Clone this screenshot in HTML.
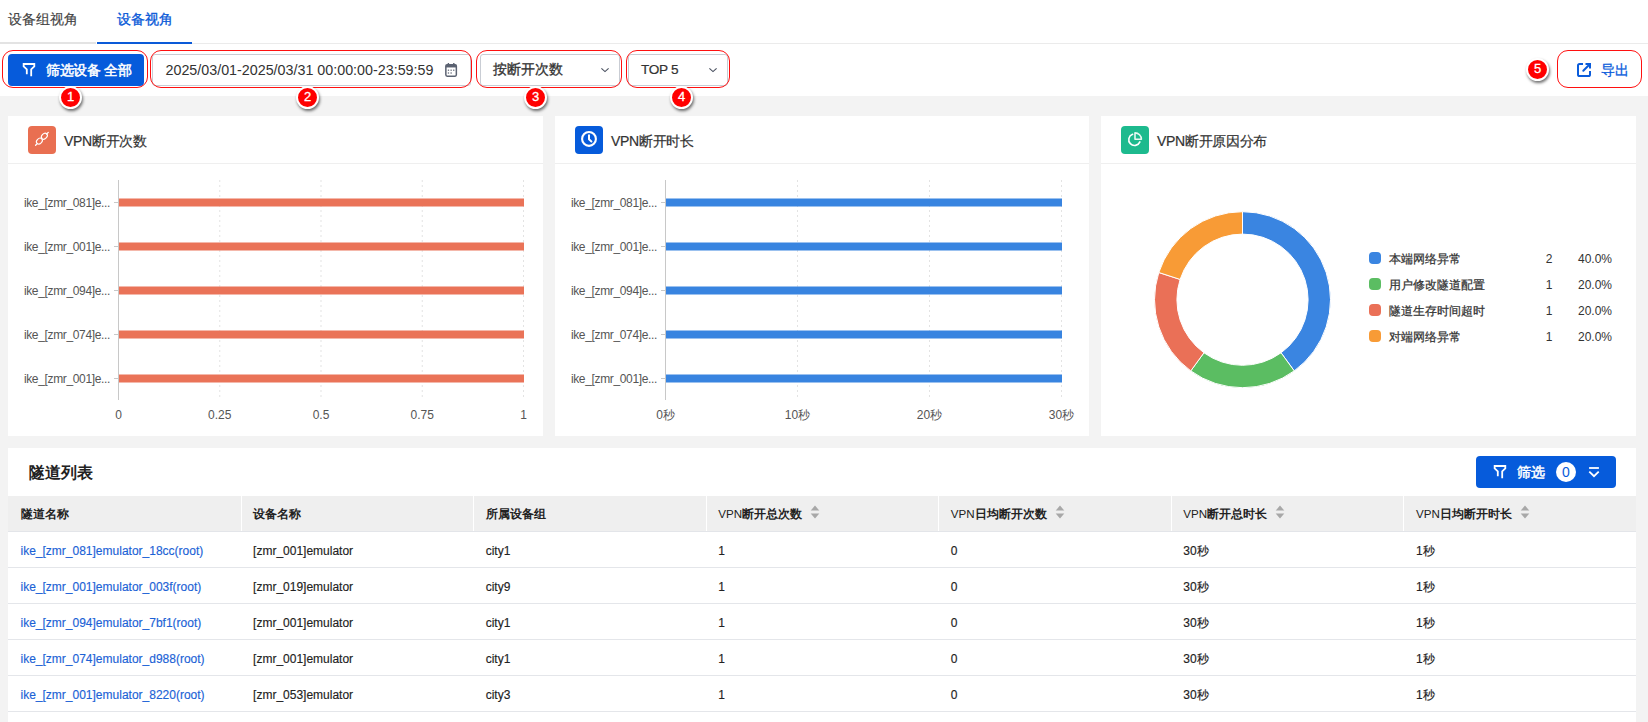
<!DOCTYPE html>
<html><head><meta charset="utf-8">
<style>
*{box-sizing:border-box;margin:0;padding:0}
html,body{width:1648px;height:722px;overflow:hidden;background:#f3f3f3;font-family:"Liberation Sans",sans-serif;color:#333}
.a{position:absolute}
.top{position:absolute;left:0;top:0;width:1648px;height:96px;background:#fff}
.tabline{position:absolute;left:0;top:42px;width:1648px;height:2px;background:#ebebeb}
.tab{position:absolute;top:9.5px;font-size:14px;line-height:18px;white-space:nowrap}
.ann{position:absolute;border:1.7px solid #ff1010;border-radius:11px}
.badge{position:absolute;width:23.4px;height:23.4px;border-radius:50%;background:#f00;border:2.6px solid #fff;box-shadow:1px 2px 3px rgba(0,0,0,.55);color:#fff;font-size:13px;font-weight:normal;text-align:center;line-height:17.4px;-webkit-text-stroke:0.3px #fff}
.inp{position:absolute;top:54px;height:32px;border:1px solid #c9cdd4;border-radius:3px;background:#fff}
.card{position:absolute;background:#fff}
.ctitle{position:absolute;left:56px;top:15.5px;font-size:14px;letter-spacing:-0.3px;line-height:18px;color:#333;white-space:nowrap;-webkit-text-stroke:0.2px #333}
.cicon{position:absolute;left:20px;top:10px;width:28px;height:28px;border-radius:4px}
.csep{position:absolute;left:0;top:47px;width:100%;height:1px;background:#efefef}
.ylab{position:absolute;font-size:12px;letter-spacing:-0.35px;line-height:14px;color:#555;white-space:nowrap;text-align:right}
.xlab{position:absolute;font-size:12px;line-height:14px;color:#555;white-space:nowrap;text-align:center;width:60px;margin-top:1px}
.th{position:absolute;top:0;height:36px;font-size:11.6px;font-weight:bold;line-height:36px;color:#222;white-space:nowrap}
.td{position:absolute;font-size:12px;line-height:38px;color:#222;white-space:nowrap;-webkit-text-stroke:0.15px currentColor}
</style></head><body>
<div class="top">
  <div class="a" style="left:0;top:42px;width:96px;height:2px;background:#e3e3e3"></div><div class="a" style="left:192px;top:43px;width:1456px;height:1px;background:#ebebeb"></div>
  <div class="tab" style="left:8.2px;color:#444;-webkit-text-stroke:0.15px #444">设备组视角</div>
  <div class="tab" style="left:117.4px;color:#0a5ad8;-webkit-text-stroke:0.3px #0a5ad8">设备视角</div>
  <div class="a" style="left:97px;top:42px;width:95px;height:2px;background:#0a5ad8"></div>
</div>



<!-- cards -->
<div class="card" style="left:8px;top:116px;width:535px;height:320px">
  <div class="cicon" style="background:#e96f51"><svg width="28" height="28" viewBox="0 0 28 28" style="display:block"><g fill="none" stroke="#fff" stroke-width="1.1"><ellipse cx="11.4" cy="15.1" rx="3.3" ry="2.5" transform="rotate(-45 11.4 15.1)"/><ellipse cx="16.4" cy="10.2" rx="3.3" ry="2.5" transform="rotate(-45 16.4 10.2)"/><path d="M7.6 19.2 L9.2 17.6 M18.6 8.0 L20.3 6.4" stroke-linecap="round" stroke-width="1.3"/></g></svg></div>
  <div class="ctitle">VPN断开次数</div>
  <div class="csep"></div>
</div>
<div class="card" style="left:555px;top:116px;width:534px;height:320px">
  <div class="cicon" style="background:#065bdb"><svg width="28" height="28" viewBox="0 0 28 28" style="display:block"><circle cx="14" cy="12.95" r="6.9" fill="none" stroke="#fff" stroke-width="2.1"/><path d="M14 9.3 V13.3 L16.4 15.5" fill="none" stroke="#fff" stroke-width="2" stroke-linecap="round" stroke-linejoin="round"/></svg></div>
  <div class="ctitle">VPN断开时长</div>
  <div class="csep"></div>
</div>
<div class="card" style="left:1101px;top:116px;width:535px;height:320px">
  <div class="cicon" style="background:#1dba8e"><svg width="28" height="28" viewBox="0 0 28 28" style="display:block"><path d="M11.6 8.2 A5.8 5.8 0 1 0 18.9 15.9" fill="none" stroke="#fff" stroke-width="1.6" stroke-linecap="round"/><path d="M14.0 6.9 V13.3 H20.4 A6.4 6.4 0 0 0 14.0 6.9 Z" fill="none" stroke="#e6f7f1" stroke-width="1.6" stroke-linejoin="round"/></svg></div>
  <div class="ctitle">VPN断开原因分布</div>
  <div class="csep"></div>
</div>
<svg class="a" style="left:0;top:0" width="1648" height="440" viewBox="0 0 1648 440"><line x1="219.75" y1="180" x2="219.75" y2="400" stroke="#e3e3e3" stroke-width="1" stroke-dasharray="2,3"/><line x1="321.0" y1="180" x2="321.0" y2="400" stroke="#e3e3e3" stroke-width="1" stroke-dasharray="2,3"/><line x1="422.25" y1="180" x2="422.25" y2="400" stroke="#e3e3e3" stroke-width="1" stroke-dasharray="2,3"/><line x1="523.5" y1="180" x2="523.5" y2="400" stroke="#e3e3e3" stroke-width="1" stroke-dasharray="2,3"/><rect x="119.0" y="198.5" width="405.0" height="8" fill="#ea7358"/><line x1="114.0" y1="202.5" x2="118.5" y2="202.5" stroke="#c8c8c8" stroke-width="1"/><rect x="119.0" y="242.5" width="405.0" height="8" fill="#ea7358"/><line x1="114.0" y1="246.5" x2="118.5" y2="246.5" stroke="#c8c8c8" stroke-width="1"/><rect x="119.0" y="286.5" width="405.0" height="8" fill="#ea7358"/><line x1="114.0" y1="290.5" x2="118.5" y2="290.5" stroke="#c8c8c8" stroke-width="1"/><rect x="119.0" y="330.5" width="405.0" height="8" fill="#ea7358"/><line x1="114.0" y1="334.5" x2="118.5" y2="334.5" stroke="#c8c8c8" stroke-width="1"/><rect x="119.0" y="374.5" width="405.0" height="8" fill="#ea7358"/><line x1="114.0" y1="378.5" x2="118.5" y2="378.5" stroke="#c8c8c8" stroke-width="1"/><line x1="118.5" y1="180" x2="118.5" y2="400" stroke="#c8c8c8" stroke-width="1"/></svg>
<div class="ylab" style="left:-10.0px;top:195.5px;width:120px">ike_[zmr_081]e...</div>
<div class="ylab" style="left:-10.0px;top:239.5px;width:120px">ike_[zmr_001]e...</div>
<div class="ylab" style="left:-10.0px;top:283.5px;width:120px">ike_[zmr_094]e...</div>
<div class="ylab" style="left:-10.0px;top:327.5px;width:120px">ike_[zmr_074]e...</div>
<div class="ylab" style="left:-10.0px;top:371.5px;width:120px">ike_[zmr_001]e...</div>
<div class="xlab" style="left:88.5px;top:407px">0</div>
<div class="xlab" style="left:189.75px;top:407px">0.25</div>
<div class="xlab" style="left:291.0px;top:407px">0.5</div>
<div class="xlab" style="left:392.25px;top:407px">0.75</div>
<div class="xlab" style="left:493.5px;top:407px">1</div>
<svg class="a" style="left:0;top:0" width="1648" height="440" viewBox="0 0 1648 440"><line x1="797.5" y1="180" x2="797.5" y2="400" stroke="#e3e3e3" stroke-width="1" stroke-dasharray="2,3"/><line x1="929.5" y1="180" x2="929.5" y2="400" stroke="#e3e3e3" stroke-width="1" stroke-dasharray="2,3"/><line x1="1061.5" y1="180" x2="1061.5" y2="400" stroke="#e3e3e3" stroke-width="1" stroke-dasharray="2,3"/><rect x="666.0" y="198.5" width="396.0" height="8" fill="#3884e0"/><line x1="661.0" y1="202.5" x2="665.5" y2="202.5" stroke="#c8c8c8" stroke-width="1"/><rect x="666.0" y="242.5" width="396.0" height="8" fill="#3884e0"/><line x1="661.0" y1="246.5" x2="665.5" y2="246.5" stroke="#c8c8c8" stroke-width="1"/><rect x="666.0" y="286.5" width="396.0" height="8" fill="#3884e0"/><line x1="661.0" y1="290.5" x2="665.5" y2="290.5" stroke="#c8c8c8" stroke-width="1"/><rect x="666.0" y="330.5" width="396.0" height="8" fill="#3884e0"/><line x1="661.0" y1="334.5" x2="665.5" y2="334.5" stroke="#c8c8c8" stroke-width="1"/><rect x="666.0" y="374.5" width="396.0" height="8" fill="#3884e0"/><line x1="661.0" y1="378.5" x2="665.5" y2="378.5" stroke="#c8c8c8" stroke-width="1"/><line x1="665.5" y1="180" x2="665.5" y2="400" stroke="#c8c8c8" stroke-width="1"/></svg>
<div class="ylab" style="left:537.0px;top:195.5px;width:120px">ike_[zmr_081]e...</div>
<div class="ylab" style="left:537.0px;top:239.5px;width:120px">ike_[zmr_001]e...</div>
<div class="ylab" style="left:537.0px;top:283.5px;width:120px">ike_[zmr_094]e...</div>
<div class="ylab" style="left:537.0px;top:327.5px;width:120px">ike_[zmr_074]e...</div>
<div class="ylab" style="left:537.0px;top:371.5px;width:120px">ike_[zmr_001]e...</div>
<div class="xlab" style="left:635.5px;top:407px">0秒</div>
<div class="xlab" style="left:767.5px;top:407px">10秒</div>
<div class="xlab" style="left:899.5px;top:407px">20秒</div>
<div class="xlab" style="left:1031.5px;top:407px">30秒</div>

<svg class="a" style="left:0;top:0" width="1648" height="440"><path d="M1242.50 211.70 A88 88 0 0 1 1294.23 370.89 L1281.06 352.77 A65.6 65.6 0 0 0 1242.50 234.10 Z" fill="#3a85e1" stroke="#fff" stroke-width="1"/><path d="M1294.23 370.89 A88 88 0 0 1 1190.77 370.89 L1203.94 352.77 A65.6 65.6 0 0 0 1281.06 352.77 Z" fill="#5bbd62" stroke="#fff" stroke-width="1"/><path d="M1190.77 370.89 A88 88 0 0 1 1158.81 272.51 L1180.11 279.43 A65.6 65.6 0 0 0 1203.94 352.77 Z" fill="#ea7057" stroke="#fff" stroke-width="1"/><path d="M1158.81 272.51 A88 88 0 0 1 1242.50 211.70 L1242.50 234.10 A65.6 65.6 0 0 0 1180.11 279.43 Z" fill="#f89b36" stroke="#fff" stroke-width="1"/></svg><div class="a" style="left:1369px;top:252px;width:12px;height:12px;border-radius:4px;background:#3a85e1"></div><div class="a" style="left:1389px;top:251px;font-size:12px;line-height:16px;color:#333;white-space:nowrap;-webkit-text-stroke:0.25px #333">本端网络异常</div><div class="a" style="left:1529px;top:251px;width:40px;text-align:center;font-size:12px;line-height:16px;color:#333">2</div><div class="a" style="left:1560px;top:251px;width:52px;text-align:right;font-size:12px;line-height:16px;color:#333">40.0%</div><div class="a" style="left:1369px;top:278px;width:12px;height:12px;border-radius:4px;background:#5bbd62"></div><div class="a" style="left:1389px;top:277px;font-size:12px;line-height:16px;color:#333;white-space:nowrap;-webkit-text-stroke:0.25px #333">用户修改隧道配置</div><div class="a" style="left:1529px;top:277px;width:40px;text-align:center;font-size:12px;line-height:16px;color:#333">1</div><div class="a" style="left:1560px;top:277px;width:52px;text-align:right;font-size:12px;line-height:16px;color:#333">20.0%</div><div class="a" style="left:1369px;top:304px;width:12px;height:12px;border-radius:4px;background:#ea7057"></div><div class="a" style="left:1389px;top:303px;font-size:12px;line-height:16px;color:#333;white-space:nowrap;-webkit-text-stroke:0.25px #333">隧道生存时间超时</div><div class="a" style="left:1529px;top:303px;width:40px;text-align:center;font-size:12px;line-height:16px;color:#333">1</div><div class="a" style="left:1560px;top:303px;width:52px;text-align:right;font-size:12px;line-height:16px;color:#333">20.0%</div><div class="a" style="left:1369px;top:330px;width:12px;height:12px;border-radius:4px;background:#f89b36"></div><div class="a" style="left:1389px;top:329px;font-size:12px;line-height:16px;color:#333;white-space:nowrap;-webkit-text-stroke:0.25px #333">对端网络异常</div><div class="a" style="left:1529px;top:329px;width:40px;text-align:center;font-size:12px;line-height:16px;color:#333">1</div><div class="a" style="left:1560px;top:329px;width:52px;text-align:right;font-size:12px;line-height:16px;color:#333">20.0%</div>
<div class="card" style="left:8px;top:448px;width:1628px;height:274px"></div><div class="a" style="left:29px;top:463px;font-size:15.5px;line-height:20px;font-weight:bold;color:#222">隧道列表</div><div class="a" style="left:8px;top:496px;width:1628px;height:36px;background:#efefef;border-bottom:1px solid #e3e5e9"></div><div class="a" style="left:240.57px;top:496px;width:1px;height:35px;background:#fff"></div><div class="a" style="left:473.14px;top:496px;width:1px;height:35px;background:#fff"></div><div class="a" style="left:705.71px;top:496px;width:1px;height:35px;background:#fff"></div><div class="a" style="left:938.29px;top:496px;width:1px;height:35px;background:#fff"></div><div class="a" style="left:1170.86px;top:496px;width:1px;height:35px;background:#fff"></div><div class="a" style="left:1403.43px;top:496px;width:1px;height:35px;background:#fff"></div><div class="a th" style="left:20.50px;top:496px">隧道名称</div><div class="a th" style="left:253.07px;top:496px">设备名称</div><div class="a th" style="left:485.64px;top:496px">所属设备组</div><div class="a th" style="left:718.21px;top:496px"><span style="font-weight:normal">VPN</span>断开总次数<svg style="position:relative;left:8px;top:1px" width="10" height="14" viewBox="0 0 10 14"><path d="M5 0.6 L9.3 5.6 H0.7Z M5 13.4 L9.3 8.4 H0.7Z" fill="#a8a8a8"/></svg></div><div class="a th" style="left:950.79px;top:496px"><span style="font-weight:normal">VPN</span>日均断开次数<svg style="position:relative;left:8px;top:1px" width="10" height="14" viewBox="0 0 10 14"><path d="M5 0.6 L9.3 5.6 H0.7Z M5 13.4 L9.3 8.4 H0.7Z" fill="#a8a8a8"/></svg></div><div class="a th" style="left:1183.36px;top:496px"><span style="font-weight:normal">VPN</span>断开总时长<svg style="position:relative;left:8px;top:1px" width="10" height="14" viewBox="0 0 10 14"><path d="M5 0.6 L9.3 5.6 H0.7Z M5 13.4 L9.3 8.4 H0.7Z" fill="#a8a8a8"/></svg></div><div class="a th" style="left:1415.93px;top:496px"><span style="font-weight:normal">VPN</span>日均断开时长<svg style="position:relative;left:8px;top:1px" width="10" height="14" viewBox="0 0 10 14"><path d="M5 0.6 L9.3 5.6 H0.7Z M5 13.4 L9.3 8.4 H0.7Z" fill="#a8a8a8"/></svg></div><div class="a" style="left:8px;top:567px;width:1628px;height:1px;background:#e4e6ea"></div><div class="td" style="left:20.50px;top:532px;color:#1b62d6">ike_[zmr_081]emulator_18cc(root)</div><div class="td" style="left:253.07px;top:532px;color:#222">[zmr_001]emulator</div><div class="td" style="left:485.64px;top:532px;color:#222">city1</div><div class="td" style="left:718.21px;top:532px;color:#222">1</div><div class="td" style="left:950.79px;top:532px;color:#222">0</div><div class="td" style="left:1183.36px;top:532px;color:#222">30秒</div><div class="td" style="left:1415.93px;top:532px;color:#222">1秒</div><div class="a" style="left:8px;top:603px;width:1628px;height:1px;background:#e4e6ea"></div><div class="td" style="left:20.50px;top:568px;color:#1b62d6">ike_[zmr_001]emulator_003f(root)</div><div class="td" style="left:253.07px;top:568px;color:#222">[zmr_019]emulator</div><div class="td" style="left:485.64px;top:568px;color:#222">city9</div><div class="td" style="left:718.21px;top:568px;color:#222">1</div><div class="td" style="left:950.79px;top:568px;color:#222">0</div><div class="td" style="left:1183.36px;top:568px;color:#222">30秒</div><div class="td" style="left:1415.93px;top:568px;color:#222">1秒</div><div class="a" style="left:8px;top:639px;width:1628px;height:1px;background:#e4e6ea"></div><div class="td" style="left:20.50px;top:604px;color:#1b62d6">ike_[zmr_094]emulator_7bf1(root)</div><div class="td" style="left:253.07px;top:604px;color:#222">[zmr_001]emulator</div><div class="td" style="left:485.64px;top:604px;color:#222">city1</div><div class="td" style="left:718.21px;top:604px;color:#222">1</div><div class="td" style="left:950.79px;top:604px;color:#222">0</div><div class="td" style="left:1183.36px;top:604px;color:#222">30秒</div><div class="td" style="left:1415.93px;top:604px;color:#222">1秒</div><div class="a" style="left:8px;top:675px;width:1628px;height:1px;background:#e4e6ea"></div><div class="td" style="left:20.50px;top:640px;color:#1b62d6">ike_[zmr_074]emulator_d988(root)</div><div class="td" style="left:253.07px;top:640px;color:#222">[zmr_001]emulator</div><div class="td" style="left:485.64px;top:640px;color:#222">city1</div><div class="td" style="left:718.21px;top:640px;color:#222">1</div><div class="td" style="left:950.79px;top:640px;color:#222">0</div><div class="td" style="left:1183.36px;top:640px;color:#222">30秒</div><div class="td" style="left:1415.93px;top:640px;color:#222">1秒</div><div class="a" style="left:8px;top:711px;width:1628px;height:1px;background:#e4e6ea"></div><div class="td" style="left:20.50px;top:676px;color:#1b62d6">ike_[zmr_001]emulator_8220(root)</div><div class="td" style="left:253.07px;top:676px;color:#222">[zmr_053]emulator</div><div class="td" style="left:485.64px;top:676px;color:#222">city3</div><div class="td" style="left:718.21px;top:676px;color:#222">1</div><div class="td" style="left:950.79px;top:676px;color:#222">0</div><div class="td" style="left:1183.36px;top:676px;color:#222">30秒</div><div class="td" style="left:1415.93px;top:676px;color:#222">1秒</div><div class="a" style="left:1476px;top:456px;width:140px;height:32px;background:#065bdb;border-radius:4px"></div><svg class="a" style="left:1489px;top:460px" width="24" height="24" viewBox="0 0 24 24"><path d="M8.8 16.3 V11.3 L5.65 8.3 V6 H16.3 V8.3 L13.2 11.3 V18.2" fill="none" stroke="#fff" stroke-width="1.8" stroke-linejoin="miter"/></svg><div class="a" style="left:1517px;top:463px;font-size:14px;line-height:18px;color:#fff;-webkit-text-stroke:0.5px #fff;letter-spacing:-0.3px">筛选</div><div class="a" style="left:1556px;top:462px;width:20px;height:20px;border-radius:50%;background:#fff;color:#065bdb;font-size:14px;line-height:20px;text-align:center">0</div><svg class="a" style="left:1587px;top:466px" width="13" height="12" viewBox="0 0 13 12"><path d="M2.1 2 H11.9" stroke="#fff" stroke-width="1.8"/><path d="M2.3 5.6 L7 10.2 L11.7 5.6" fill="none" stroke="#fff" stroke-width="1.8"/></svg>
<!-- toolbar -->
<div class="a" style="left:8px;top:54px;width:136px;height:32px;background:#065bdb;border-radius:4px"></div>
<svg class="a" style="left:18px;top:58px" width="24" height="24" viewBox="0 0 24 24"><path d="M8.8 16.3 V11.3 L5.65 8.3 V6 H16.3 V8.3 L13.2 11.3 V18.2" fill="none" stroke="#fff" stroke-width="1.8" stroke-linejoin="miter"/></svg>
<div class="a" style="left:46px;top:61px;font-size:14px;line-height:18px;color:#fff;white-space:nowrap;-webkit-text-stroke:0.5px #fff;letter-spacing:-0.3px">筛选设备 全部</div>

<div class="inp" style="left:152px;width:319px"></div>
<div class="a" id="datet" style="left:165.5px;top:61px;font-size:14.3px;line-height:18px;color:#333;white-space:nowrap">2025/03/01-2025/03/31 00:00:00-23:59:59</div>
<svg class="a" style="left:445px;top:63px" width="13" height="14" viewBox="0 0 13 14"><rect x="0.85" y="1.85" width="10.5" height="11.3" rx="1.3" fill="none" stroke="#5b6271" stroke-width="1.5"/><rect x="0.85" y="1.85" width="10.5" height="2.6" fill="#5b6271"/><rect x="2.7" y="0" width="1.4" height="2.6" fill="#5b6271"/><rect x="8.1" y="0" width="1.4" height="2.6" fill="#5b6271"/><rect x="2.8" y="6.6" width="1.3" height="1.2" fill="#5b6271"/><rect x="5.5" y="6.6" width="1.3" height="1.2" fill="#5b6271"/><rect x="8.1" y="6.6" width="1.3" height="1.2" fill="#5b6271"/><rect x="2.8" y="9.4" width="1.3" height="1.2" fill="#5b6271"/><rect x="5.5" y="9.4" width="1.3" height="1.2" fill="#5b6271"/></svg>

<div class="inp" style="left:480px;width:140px"></div>
<div class="a" style="left:493px;top:60px;font-size:14px;line-height:18px;color:#333;white-space:nowrap;-webkit-text-stroke:0.3px #333">按断开次数</div>
<svg class="a" style="left:600px;top:66px" width="10" height="7" viewBox="0 0 10 7"><path d="M1.4 2.4 L5 5.6 L8.6 2.4" fill="none" stroke="#4a5160" stroke-width="1.15"/></svg>

<div class="inp" style="left:628px;width:100px"></div>
<div class="a" style="left:641px;top:61px;font-size:13.6px;line-height:18px;color:#333;white-space:nowrap;-webkit-text-stroke:0.2px #333;letter-spacing:-0.3px">TOP 5</div>
<svg class="a" style="left:708px;top:66px" width="10" height="7" viewBox="0 0 10 7"><path d="M1.4 2.4 L5 5.6 L8.6 2.4" fill="none" stroke="#4a5160" stroke-width="1.15"/></svg>

<svg class="a" style="left:1576px;top:62px" width="16" height="16" viewBox="0 0 16 16"><path d="M7 2 H3.6 Q2 2 2 3.6 V12.4 Q2 14 3.6 14 H12.4 Q14 14 14 12.4 V9" fill="none" stroke="#0a5cdb" stroke-width="2"/><path d="M9.5 2 H14 V6.5" fill="none" stroke="#0a5cdb" stroke-width="2"/><path d="M13.5 2.5 L7.3 8.7" stroke="#0a5cdb" stroke-width="2" stroke-linecap="round"/></svg>
<div class="a" style="left:1601px;top:61px;font-size:14px;line-height:18px;color:#0a5cdb;white-space:nowrap;-webkit-text-stroke:0.3px #0a5cdb">导出</div>

<!-- annotations -->
<div class="ann" style="left:2px;top:50px;width:146px;height:38px"></div>
<div class="ann" style="left:150px;top:50px;width:322px;height:38px"></div>
<div class="ann" style="left:476px;top:50px;width:146px;height:38px"></div>
<div class="ann" style="left:626px;top:50px;width:104px;height:38px"></div>
<div class="ann" style="left:1557px;top:50px;width:85px;height:38px"></div>
<div class="badge" style="left:59px;top:86px">1</div>
<div class="badge" style="left:296px;top:86px">2</div>
<div class="badge" style="left:524px;top:86px">3</div>
<div class="badge" style="left:670px;top:86px">4</div>
<div class="badge" style="left:1526px;top:57.5px">5</div>
</body></html>
